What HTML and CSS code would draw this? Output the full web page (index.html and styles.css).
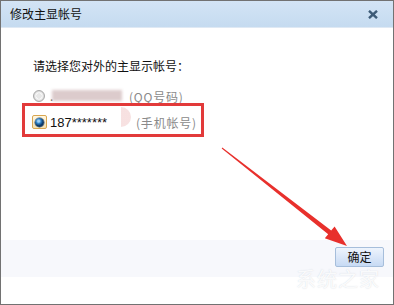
FILE: index.html
```html
<!DOCTYPE html>
<html lang="zh-CN">
<head>
<meta charset="utf-8">
<link rel="stylesheet" href="styles.css">
</head>
<body>
<div class="dialog">
  <div class="titlebar">
    <span class="title">修改主显帐号</span>
    <svg class="close" width="10" height="9" viewBox="0 0 10 9"><path d="M1 0.8 L9 8.2 M9 0.8 L1 8.2" stroke="#3d5b77" stroke-width="2.4"/></svg>
  </div>
  <div class="content">
    <div class="heading">请选择您对外的主显示帐号：</div>
    <div class="row row-qq">
      <span class="radio-off"></span>
      <span class="name"><span class="dot">.</span><span class="blob"></span></span>
      <span class="label label-qq">(QQ号码)</span>
    </div>
    <div class="row row-phone">
      <span class="radio-on"><span class="knob"></span></span>
      <span class="name name-phone">187*******<span class="circle"></span></span>
      <span class="label label-phone">(手机帐号)</span>
    </div>
  </div>
  <div class="footer">
    <button class="ok">确定</button>
  </div>
  <div class="bottom"></div>
  <div class="highlight"></div>
  <div class="watermark">系统之家</div>
  <svg class="arrow" width="394" height="305" viewBox="0 0 394 305">
    <polygon points="222.3,147.6 331.2,230.6 334.6,226.4 347,246 324.8,238.2 328.2,234.2 221.7,148.4" fill="#e8302c"/>
  </svg>
</div>
</body>
</html>
```
FILE: styles.css
```css
html, body {
  margin: 0;
  padding: 0;
  background: #fff;
}
body {
  font-family: "Noto Sans CJK SC", "Liberation Sans", sans-serif;
  font-size: 12px;
  color: #111;
}
.dialog {
  position: relative;
  width: 394px;
  height: 305px;
  box-sizing: border-box;
  border: 1px solid #727272;
  display: flex;
  flex-direction: column;
  overflow: hidden;
}
.titlebar {
  height: 26px;
  flex: none;
  background: linear-gradient(#d3e4f5, #c5dbf0);
  border-bottom: 1px solid #dfe9f4;
  display: flex;
  align-items: center;
  justify-content: space-between;
  padding: 0 15px 0 9px;
}
.title {
  font-size: 12px;
  line-height: 16px;
  color: #111;
}
.close {
  display: block;
  margin-top: 1px;
}
.content {
  flex: 1;
  padding: 30px 0 0 31px;
}
.heading {
  line-height: 16px;
  height: 16px;
  padding-left: 1px;
}
.row {
  display: flex;
  align-items: center;
  height: 16px;
}
.row-qq {
  margin-top: 14px;
}
.row-phone {
  margin-top: 10px;
}
.radio-off {
  width: 10px;
  height: 10px;
  margin-left: 1px;
  border-radius: 50%;
  border: 1px solid #a9a9a9;
  background: radial-gradient(circle at 50% 50%, #e8e8e8 0 2.5px, #fafafa 3px, #d6d6d6 5px);
  flex: none;
}
.name {
  position: relative;
  display: flex;
  align-items: center;
  width: 79px;
  margin-left: 5px;
  height: 16px;
}
.dot {
  color: #555;
  margin-top: -2px;
}
.blob {
  position: absolute;
  left: 2px;
  top: 2px;
  width: 70px;
  height: 11px;
  background: #dccbcc;
  filter: blur(1.5px);
}
.label {
  color: #8a8a8a;
  letter-spacing: 0.8px;
}
.label-qq {
  margin-left: 0;
}
.radio-on {
  position: relative;
  width: 13px;
  height: 12px;
  border: 1px solid #d9a650;
  border-radius: 2px;
  background: linear-gradient(#fff7e2, #f4e0b0);
  flex: none;
  display: flex;
  align-items: center;
  justify-content: center;
}
.knob {
  width: 9px;
  height: 9px;
  border-radius: 50%;
  background: radial-gradient(circle at 40% 35%, #9fd0f5 0 1px, #2d7fc4 2.5px, #103a66 4.5px);
  box-shadow: 0 0 0 0.5px #4b5a6a;
}
.name-phone {
  margin-left: 3px;
  width: 86px;
  font-family: "Liberation Sans", sans-serif;
  font-size: 13px;
  color: #111;
}
.circle {
  position: absolute;
  left: 61px;
  top: -7px;
  width: 20px;
  height: 20px;
  border-radius: 50%;
  background: linear-gradient(90deg, #ffffff 50%, #f6dcdc 50%);
  opacity: 0.85;
}
.footer {
  height: 37px;
  flex: none;
  margin-top: 0;
  background: #f7f8fc;
  display: flex;
  justify-content: flex-end;
  align-items: flex-start;
  padding: 7px 9px 0 0;
  box-sizing: border-box;
}
.ok {
  width: 49px;
  height: 20px;
  padding: 0;
  border: 1px solid #a6bedb;
  border-radius: 2px;
  background: linear-gradient(#eef4fd, #c7daf4);
  font-family: "Noto Sans CJK SC", sans-serif;
  font-size: 12px;
  line-height: 16px;
  color: #111;
}
.bottom {
  height: 27px;
  flex: none;
}
.highlight {
  position: absolute;
  left: 21px;
  top: 102px;
  width: 176px;
  height: 28px;
  border: 3px solid #e23a3a;
}
.watermark {
  position: absolute;
  left: 295px;
  top: 267px;
  font-size: 20px;
  line-height: 22px;
  color: rgba(255, 255, 255, 0.9);
  text-shadow: 0 0 1px rgba(170, 180, 195, 0.5);
  letter-spacing: 1px;
}
.arrow {
  position: absolute;
  left: -1px;
  top: -1px;
}
```
